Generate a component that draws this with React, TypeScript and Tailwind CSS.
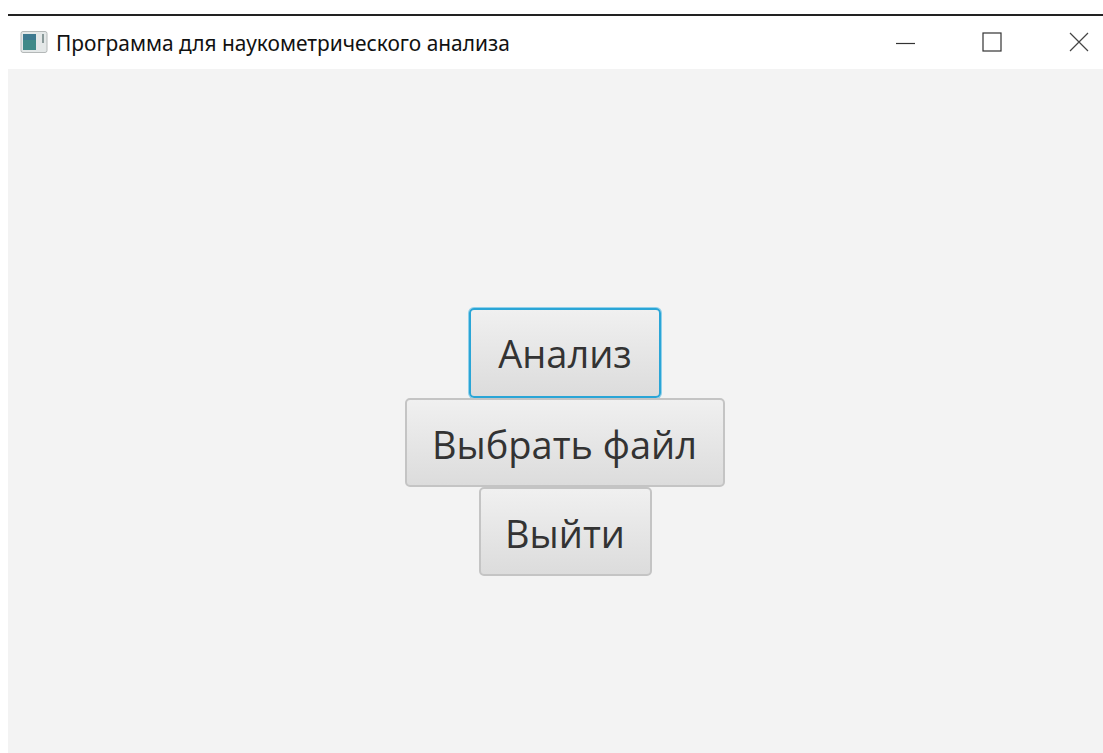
const menuButton =
  'flex h-[89px] items-center justify-center rounded-[5px] border-2 bg-gradient-to-b from-[#f0f0f0] to-[#dcdcdc] text-[38px] leading-none text-[#333333]'

function AppIcon() {
  return (
    <svg width="28" height="24" viewBox="0 0 28 24" className="shrink-0">
      <rect x="1" y="1.5" width="26" height="21" rx="2" fill="#e4e8e8" stroke="#b4b8b8" />
      <rect x="3" y="4" width="13" height="16" fill="#3f8a88" />
      <rect x="3" y="4" width="13" height="6" fill="#3d6f96" opacity="0.6" />
      <rect x="22" y="4" width="2" height="9" fill="#8a9a9a" />
    </svg>
  )
}

export default function App() {
  return (
    <div className="flex h-[753px] w-[1103px] flex-col overflow-hidden bg-white pl-2 font-['Open_Sans',sans-serif]">
      <div className="mt-[14px] h-[1.5px] bg-[#222222]" />

      <div className="flex h-[53.5px] items-center text-[#111111]">
        <div className="flex flex-1 items-center gap-[8px] pl-[12px]">
          <AppIcon />
          <span className="pt-[2px] font-['Noto_Sans',sans-serif] text-[20.9px]">Программа для наукометрического анализа</span>
        </div>
        <div className="flex items-center">
          <svg width="20" height="20" viewBox="0 0 20 20" className="mr-[66px]">
            <path d="M0 11.5H19" stroke="#333333" strokeWidth="1.2" />
          </svg>
          <svg width="20" height="20" viewBox="0 0 20 20" className="mr-[67px]">
            <rect x="1" y="1" width="18" height="18" fill="none" stroke="#333333" strokeWidth="1.2" />
          </svg>
          <svg width="20" height="20" viewBox="0 0 20 20" className="mr-[14px]">
            <path d="M1 1L19 19M19 1L1 19" stroke="#444444" strokeWidth="1.2" />
          </svg>
        </div>
      </div>

      <main className="flex flex-1 flex-col items-center justify-center bg-[#f3f3f3] pt-[61px] pl-[19px]">
        <button className={`${menuButton} h-[90px] w-[192px] border-[#2aa5d6] shadow-[0_0_0_1px_#8fd0ea]`}>Анализ</button>
        <button className={`${menuButton} mr-px w-[320px] border-[#c4c4c4] pt-[3px]`}>Выбрать файл</button>
        <button className={`${menuButton} w-[173px] border-[#c4c4c4] pt-[3px]`}>Выйти</button>
      </main>
    </div>
  )
}
